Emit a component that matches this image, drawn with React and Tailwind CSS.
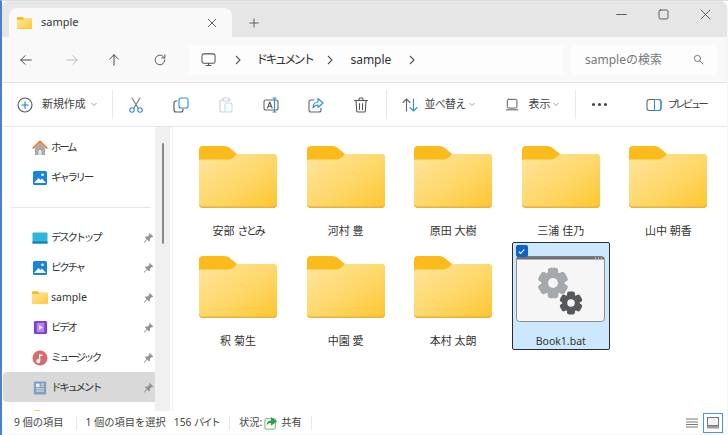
import { useId } from 'react'

const font = { fontFamily: '"Noto Sans", "Noto Sans CJK JP", sans-serif' }

function Folder({ className }) {
  const id = useId()
  return (
    <svg viewBox="0 0 78 62" className={className}>
      <defs>
        <linearGradient id={id} x1="0" y1="0" x2="1" y2="1">
          <stop offset="0" stopColor="#ffe59e" />
          <stop offset="0.55" stopColor="#fed768" />
          <stop offset="1" stopColor="#fdc62f" />
        </linearGradient>
      </defs>
      <path d="M0 4a4 4 0 0 1 4-4h21c3 0 5 1 7 3l6 5h36a4 4 0 0 1 4 4v20H0z" fill="#fbbb1d" />
      <path d="M0 15c0-1 1-1.500 2-1.500h26c3 0 5-.5 7-2.500l3-3h36a4 4 0 0 1 4 4v46a4 4 0 0 1-4 4H4a4 4 0 0 1-4-4z" fill={`url(#${id})`} />
      <path d="M0 57.500V58a4 4 0 0 0 4 4h70a4 4 0 0 0 4-4v-.5a4 4 0 0 1-4 3H4a4 4 0 0 1-4-3z" fill="#e8b23c" />
    </svg>
  )
}

function Gear({ cx, cy, r, fill }) {
  const teeth = [0, 60, 120, 180, 240, 300]
  return (
    <g fill={fill}>
      {teeth.map(a => (
        <rect key={a} x={cx - r * 0.36} y={cy - r * 1.05} width={r * 0.72} height={r * 0.6} rx={r * 0.2} transform={`rotate(${a} ${cx} ${cy})`} />
      ))}
      <circle cx={cx} cy={cy} r={r * 0.8} />
      <circle cx={cx} cy={cy} r={r * 0.34} fill="#f6f6f6" />
    </g>
  )
}

function Stroke({ w = 16, children, color = '#4a4a4a', sw = 1.1, className = '' }) {
  return (
    <svg viewBox="0 0 16 16" width={w} height={w} fill="none" stroke={color} strokeWidth={sw} strokeLinecap="round" strokeLinejoin="round" className={`shrink-0 ${className}`}>
      {children}
    </svg>
  )
}

function Chevron({ className = '' }) {
  return (
    <svg viewBox="0 0 8 5" width="8" height="5" fill="none" stroke="#a0a0a0" strokeWidth="1" className={`shrink-0 ${className}`}>
      <path d="M1.500 1l2.500 2.500L6.500 1" />
    </svg>
  )
}

function Crumb({ className = '' }) {
  return (
    <svg viewBox="0 0 6 10" width="6" height="10" fill="none" stroke="#555" strokeWidth="1.100" className={`shrink-0 ${className}`}>
      <path d="M1 1l4 4-4 4" />
    </svg>
  )
}

function Divider({ className = '' }) {
  return <div className={`w-px h-[29px] bg-[#e8e8e8] shrink-0 ${className}`} />
}

function Pin() {
  return (
    <svg viewBox="0 0 12 12" width="11" height="11" className="shrink-0" fill="#8e9499">
      <path d="M7 .8l4.200 4.200-1.100.6-.6-.2-2 2 .1 2-1 1-2-2-3.200 3.200-.6-.6 3.200-3.200-2-2 1-1 2 .1 2-2-.2-.6z" />
    </svg>
  )
}

const sideItems = [
  { label: '\u30c7\u30b9\u30af\u30c8\u30c3\u30d7', icon: 'desktop', pin: true },
  { label: '\u30d4\u30af\u30c1\u30e3', icon: 'pictures', pin: true },
  { label: 'sample', icon: 'folder', pin: true },
  { label: '\u30d3\u30c7\u30aa', icon: 'video', pin: true },
  { label: '\u30df\u30e5\u30fc\u30b8\u30c3\u30af', icon: 'music', pin: true },
  { label: '\u30c9\u30ad\u30e5\u30e1\u30f3\u30c8', icon: 'docs', pin: true, active: true },
]

function SideIcon({ kind }) {
  if (kind === 'home') return (
    <svg viewBox="0 0 16 16" width="16" height="16" className="shrink-0">
      <path d="M3 8v7h10V8L8 3z" fill="#a9a9a9" />
      <rect x="6.500" y="10" width="3" height="5" fill="#e6e6e6" />
      <path d="M.8 8.300L8 1.500l7.200 6.800" fill="none" stroke="#e8792a" strokeWidth="1.800" />
    </svg>
  )
  if (kind === 'gallery' || kind === 'pictures') return (
    <svg viewBox="0 0 16 16" width="16" height="16" className="shrink-0">
      <rect x="1" y="1" width="14" height="14" rx="1.500" fill="#1b83dc" />
      <path d="M2 13l4.500-5 2 2 1.500-1.500L14 13z" fill="#fff" />
      <circle cx="10.500" cy="4.800" r="1.300" fill="#fff" />
    </svg>
  )
  if (kind === 'desktop') return (
    <svg viewBox="0 0 16 16" width="16" height="16" className="shrink-0">
      <rect x="0.500" y="2.500" width="15" height="11" rx="1" fill="#30b6d6" />
      <rect x="0.500" y="11.500" width="15" height="2" fill="#1778b8" />
    </svg>
  )
  if (kind === 'folder') return <Folder className="w-4 h-[13px] shrink-0" />
  if (kind === 'video') return (
    <svg viewBox="0 0 16 16" width="15" height="15" className="shrink-0">
      <rect x="1" y="1" width="14" height="14" rx="1.500" fill="#7b3fd1" />
      <rect x="4" y="3" width="8" height="10" fill="#b288ea" />
      <path d="M6.500 5.500v5l4-2.500z" fill="#f2eafc" />
    </svg>
  )
  if (kind === 'music') return (
    <svg viewBox="0 0 16 16" width="16" height="16" className="shrink-0">
      <circle cx="8" cy="8" r="7.500" fill="#d8696d" />
      <path d="M7 4.500h3.500v1.500H8.300v5a2 2 0 1 1-1.300-1.700z" fill="#fff" />
    </svg>
  )
  return (
    <svg viewBox="0 0 16 16" width="14" height="16" className="shrink-0">
      <rect x="1" y="0.500" width="14" height="15" rx="1" fill="#7f9fc1" />
      <rect x="3.500" y="3" width="4" height="4" fill="#eef3f8" />
      <path d="M9 3.500h3.500M9 6h3.500M3.500 9h9M3.500 11.500h9" stroke="#eef3f8" strokeWidth="1" />
    </svg>
  )
}

function SideRow({ label, icon, pin, active }) {
  return (
    <div className={`h-[30px] flex items-center pt-[1px] pl-[29px] pr-[3px] w-[154px] ml-[1px] rounded-sm ${active ? 'bg-[#d9d9d9]' : ''}`}>
      <div className="w-4 flex justify-center shrink-0"><SideIcon kind={icon} /></div>
      <span className={`ml-[3px] text-[10.500px] text-[#333] flex-1 whitespace-nowrap ${label === 'sample' ? '' : 'tracking-[-2.300px]'}`}>
        {label}
      </span>
      {pin && <Pin />}
    </div>
  )
}

const files = [
  { name: '\u5b89\u90e8 ', kana: '\u3055\u3068\u307f' },
  { name: '\u6cb3\u6751 \u8c4a' },
  { name: '\u539f\u7530 \u5927\u6a39' },
  { name: '\u4e09\u6d66 \u4f73\u4e43' },
  { name: '\u5c71\u4e2d \u671d\u9999' },
  { name: '\u91c8 \u83ca\u751f' },
  { name: '\u4e2d\u5712 \u611b' },
  { name: '\u672c\u6751 \u592a\u6717' },
]

function FileCell({ name, kana }) {
  return (
    <div className="w-[98px] h-[108px] flex flex-col items-center pt-[14px]">
      <Folder className="w-[78px] h-[62px]" />
      <div className="mt-[15px] text-[11px] text-[#333] leading-[16px] whitespace-pre">
        {name}
        {kana && <span className="tracking-[-2.300px]">{kana}</span>}
      </div>
    </div>
  )
}

function BatCell() {
  return (
    <div className="relative w-[98px] h-[108px] flex flex-col items-center bg-[#cce8ff] border border-[#2b2b2b] rounded-[2px] pt-[13px]">
      <div className="absolute left-[3px] top-[2px] w-[12px] h-[12px] rounded-[2px] bg-[#0f63c4] flex items-center justify-center">
        <svg viewBox="0 0 10 10" width="9" height="9" fill="none" stroke="#fff" strokeWidth="1.200"><path d="M2 5.200l2 2 4-4.400" /></svg>
      </div>
      <svg viewBox="0 0 89 66" width="89" height="66">
        <rect x="0.500" y="0.500" width="88" height="65" rx="3" fill="#f6f6f6" stroke="#8d8d8d" />
        <path d="M0.500 3.500a3 3 0 0 1 3-3h82a3 3 0 0 1 3 3z" fill="#6f6f6f" />
        <path d="M79 2h1M82 2h1M85 2h1" stroke="#d0d0d0" strokeWidth="1.500" />
        <Gear cx="37" cy="27" r="14.500" fill="#a6a9ac" />
        <Gear cx="55" cy="47" r="11" fill="#55595c" />
      </svg>
      <div className="mt-[11px] text-[10.500px] text-[#333] leading-[16px]">Book1.bat</div>
    </div>
  )
}

function ToolIcon({ children }) {
  return <div className="w-[45px] flex justify-center shrink-0">{children}</div>
}

export default function App() {
  return (
    <div style={font} className="w-[728px] h-[435px] overflow-hidden bg-white border-l-2 border-[#4a7fd0] border-t border-t-[#dddddd]">
      <div className="h-[433px] w-[725px] rounded-[8px] overflow-hidden flex flex-col bg-white shadow-[0_0_1px_#999]">
        {/* tab strip */}
        <div className="h-[36px] bg-[#e6e6e6] flex items-end pl-[7px] shrink-0">
          <div className="w-[223px] h-[29px] bg-[#f9f9f9] rounded-t-[8px] flex items-center pl-[8px] pr-[14px]">
            <Folder className="w-[15px] h-[12px] shrink-0" />
            <span className="ml-[9px] text-[11px] text-[#333] flex-1">sample</span>
            <Stroke w={12} color="#444"><path d="M3 3l10 10M13 3L3 13" /></Stroke>
          </div>
          <div className="ml-[16px] h-[29px] flex items-center">
            <Stroke w={12} color="#444"><path d="M8 2.500v11M2.500 8h11" /></Stroke>
          </div>
          <div className="ml-auto h-[36px] pb-[9px] flex items-center pr-[16px] gap-[31px]">
            <Stroke w={11} color="#333"><path d="M1 8h14" /></Stroke>
            <Stroke w={11} color="#333"><rect x="1.500" y="1.500" width="13" height="13" rx="2" /></Stroke>
            <Stroke w={11} color="#333"><path d="M1.500 1.500l13 13M14.500 1.500l-13 13" /></Stroke>
          </div>
        </div>

        {/* address row */}
        <div className="h-[46px] bg-[#f9f9f9] border-b border-[#e3e3e3] flex items-center shrink-0">
          <div className="w-[187px] flex items-center shrink-0">
            <div className="w-[46px] flex justify-center ml-[1px]"><Stroke w={14} color="#444"><path d="M14 8H2M7 3L2 8l5 5" /></Stroke></div>
            <div className="w-[45px] flex justify-center"><Stroke w={14} color="#b8b8b8"><path d="M2 8h12M9 3l5 5-5 5" /></Stroke></div>
            <div className="w-[40px] flex justify-center"><Stroke w={14} color="#444"><path d="M8 14V2M3 7l5-5 5 5" /></Stroke></div>
            <div className="w-[52px] flex justify-center"><Stroke w={14} color="#555"><path d="M13.500 8a5.500 5.500 0 1 1-1.600-3.900L13.500 5.700M13.500 2v3.700H10" /></Stroke></div>
          </div>
          <div className="w-[374px] h-[30px] bg-[#fdfdfd] rounded-[4px] flex items-center text-[12px] text-[#333] pl-[12px] shrink-0">
            <Stroke w={15} color="#555"><rect x="1" y="2" width="14" height="10" rx="2" /><path d="M5.500 14.500h5M8 12v2.500" /></Stroke>
            <Crumb className="ml-[19px]" />
            <span className="ml-[15px] tracking-[-2.600px] whitespace-nowrap">{'\u30c9\u30ad\u30e5\u30e1\u30f3\u30c8'}</span>
            <Crumb className="ml-[15px]" />
            <span className="ml-[17px]">sample</span>
            <Crumb className="ml-[18px]" />
          </div>
          <div className="ml-[8px] w-[146px] h-[30px] bg-[#fdfdfd] rounded-[4px] flex items-center pl-[14px] pr-[13px] shrink-0">
            <span className="text-[12px] text-[#777] flex-1">sample{'\u306e\u691c\u7d22'}</span>
            <Stroke w={11} color="#666" sw={1.300}><circle cx="6.500" cy="6.500" r="4.500" /><path d="M10 10l4.500 4.500" /></Stroke>
          </div>
        </div>

        {/* toolbar */}
        <div className="h-[44px] bg-white border-b border-[#e5e5e5] flex items-center shrink-0 text-[11px] text-[#444]">
          <div className="ml-[15px]"><Stroke w={16} color="#555"><circle cx="8" cy="8" r="7" /><path d="M8 4.800v6.400M4.800 8h6.400" stroke="#1b7fd8" /></Stroke></div>
          <span className="ml-[9px] tracking-[-0.100px] whitespace-nowrap">{'\u65b0\u898f\u4f5c\u6210'}</span>
          <Chevron className="ml-[4px]" />
          <Divider className="ml-[14px]" />
          <div className="ml-[1px] flex items-center">
            <ToolIcon><Stroke w={16} color="#777"><path d="M4 1l6 10M12 1L6 11" /><circle cx="4" cy="13" r="2.200" stroke="#2b8fe0" /><circle cx="12" cy="13" r="2.200" stroke="#2b8fe0" /></Stroke></ToolIcon>
            <ToolIcon><Stroke w={16} color="#555"><rect x="6" y="1" width="9" height="10" rx="2" stroke="#2b8fe0" /><path d="M4 4H3a2 2 0 0 0-2 2v7a2 2 0 0 0 2 2h5a2 2 0 0 0 2-2v-1" /></Stroke></ToolIcon>
            <ToolIcon><Stroke w={16} color="#cfcfcf"><path d="M5 3H3.500A1.500 1.500 0 0 0 2 4.500v9A1.500 1.500 0 0 0 3.500 15H7M11 3h1.500" /><rect x="5" y="1" width="6" height="3" rx="1" /><rect x="7" y="6" width="7" height="9" rx="1.500" stroke="#b8dcf8" /></Stroke></ToolIcon>
            <ToolIcon><Stroke w={16} color="#666"><rect x="1" y="3" width="14" height="10" rx="2" /><path d="M4.500 11l2.300-6 2.300 6M5.300 9.200h3" stroke="#555" /><path d="M11.500 1v14M10 1h3M10 15h3" stroke="#2b8fe0" /></Stroke></ToolIcon>
            <ToolIcon><Stroke w={16} color="#666"><path d="M6 3H3a2 2 0 0 0-2 2v8a2 2 0 0 0 2 2h8a2 2 0 0 0 2-2v-2" /><path d="M10 1.500L15 6l-5 4.500V8c-2.500 0-4 1-5 3 0-4 2-6 5-6z" stroke="#2b8fe0" /></Stroke></ToolIcon>
            <ToolIcon><Stroke w={16} color="#555"><path d="M1.500 3.500h13M6 3.500V2a1 1 0 0 1 1-1h2a1 1 0 0 1 1 1v1.500M3 3.500l.7 10.500a1 1 0 0 0 1 1h6.600a1 1 0 0 0 1-1l.7-10.500M6.500 6.500v6M9.500 6.500v6" /></Stroke></ToolIcon>
          </div>
          <Divider className="ml-[2px]" />
          <div className="ml-[15px]"><Stroke w={16} color="#666"><path d="M4.500 14V2M1 5.500L4.500 2 8 5.500" /><path d="M11.500 2v12M8 10.500l3.500 3.500 3.500-3.500" stroke="#2b8fe0" /></Stroke></div>
          <span className="ml-[7px] tracking-[-0.800px] whitespace-nowrap">{'\u4e26\u3079\u66ff\u3048'}</span>
          <Chevron className="ml-[3px]" />
          <div className="ml-[30px]"><Stroke w={14} color="#555"><rect x="1.500" y="1.500" width="11" height="10" rx="1.500" /><path d="M.5 13.500h13" /></Stroke></div>
          <span className="ml-[8px] whitespace-nowrap">{'\u8868\u793a'}</span>
          <Chevron className="ml-[2px]" />
          <Divider className="ml-[15px]" />
          <div className="ml-[16px] flex gap-[3px]">
            <span className="w-[3px] h-[3px] rounded-full bg-[#444]" />
            <span className="w-[3px] h-[3px] rounded-full bg-[#444]" />
            <span className="w-[3px] h-[3px] rounded-full bg-[#444]" />
          </div>
          <div className="ml-[39px]"><Stroke w={16} color="#666"><rect x="1" y="2.500" width="14" height="11" rx="2.500" /><path d="M8.500 2.500h4a2.500 2.500 0 0 1 2.500 2.500v6a2.500 2.500 0 0 1-2.500 2.500h-4z" stroke="#2b8fe0" /></Stroke></div>
          <span className="ml-[5px] text-[10.500px] tracking-[-2.800px] whitespace-nowrap">{'\u30d7\u30ec\u30d3\u30e5\u30fc'}</span>
        </div>

        {/* body */}
        <div className="flex-1 flex min-h-0 bg-white">
          <div className="w-[171px] flex shrink-0 border-r border-[#eeeeee] pr-[2px]">
            <div className="w-[156px] pt-[5px] overflow-hidden">
              <SideRow label={'\u30db\u30fc\u30e0'} icon="home" />
              <SideRow label={'\u30ae\u30e3\u30e9\u30ea\u30fc'} icon="gallery" />
              <div className="h-[30px] flex items-center pl-[9px]"><div className="w-[140px] h-px bg-[#e5e5e5]" /></div>
              {sideItems.map(item => <SideRow key={item.label} {...item} />)}
              <div className="pl-[32px] mt-[8px]"><Folder className="w-4 h-[13px]" /></div>
            </div>
            <div className="w-[15px] bg-[#f0f0f0] flex justify-center pt-[16px]">
              <div className="w-[2px] h-[101px] rounded-full bg-[#8b8b8b]" />
            </div>
          </div>
          <div className="flex-1 pl-[16px] pt-[5px]">
            <div className="grid grid-cols-[repeat(5,98px)] gap-x-[9.600px] gap-y-[2px]">
              {files.map(f => <FileCell key={f.name} {...f} />)}
              <BatCell />
            </div>
          </div>
        </div>

        {/* status bar */}
        <div className="h-[23px] bg-white flex items-center text-[10.250px] text-[#444] shrink-0 pl-[12px]">
          <span className="whitespace-nowrap">9 {'\u500b\u306e\u9805\u76ee'}</span>
          <div className="ml-[12px] w-px h-[14px] bg-[#e8e8e8]" />
          <span className="ml-[9px] whitespace-nowrap">1 {'\u500b\u306e\u9805\u76ee\u3092\u9078\u629e'}</span>
          <span className="ml-[8px] whitespace-nowrap">156 <span className="tracking-[-2px]">{'\u30d0\u30a4\u30c8'}</span></span>
          <div className="ml-[10px] w-px h-[14px] bg-[#e8e8e8]" />
          <span className="ml-[9px] whitespace-nowrap">{'\u72b6\u6cc1'}:</span>
          <svg viewBox="0 0 16 16" width="14" height="14" className="ml-[2px] shrink-0">
            <rect x="1" y="3" width="12" height="12" rx="1" fill="#fff" stroke="#56b85a" />
            <path d="M8 1l7 5-7 5V8c-3 0-4 1-5 3 0-4 2-6 5-6z" fill="#2f9e44" />
          </svg>
          <span className="ml-[3px] whitespace-nowrap">{'\u5171\u6709'}</span>
          <div className="ml-[9px] w-px h-[14px] bg-[#e8e8e8]" />
          <div className="ml-auto flex items-center pr-[4px]">
            <svg viewBox="0 0 12 10" width="12" height="10" stroke="#777" strokeWidth="1" className="mr-[5px]"><path d="M0 1h12M0 4h12M0 6.500h12M0 9h12" /></svg>
            <div className="w-[20px] h-[20px] border border-[#3e9ae8] flex items-center justify-center">
              <svg viewBox="0 0 12 12" width="12" height="12"><rect x="0.500" y="0.500" width="11" height="8" fill="#f2f2f2" stroke="#777" /><rect x="0" y="9" width="12" height="2.500" fill="#999" /></svg>
            </div>
          </div>
        </div>
      </div>
    </div>
  )
}
